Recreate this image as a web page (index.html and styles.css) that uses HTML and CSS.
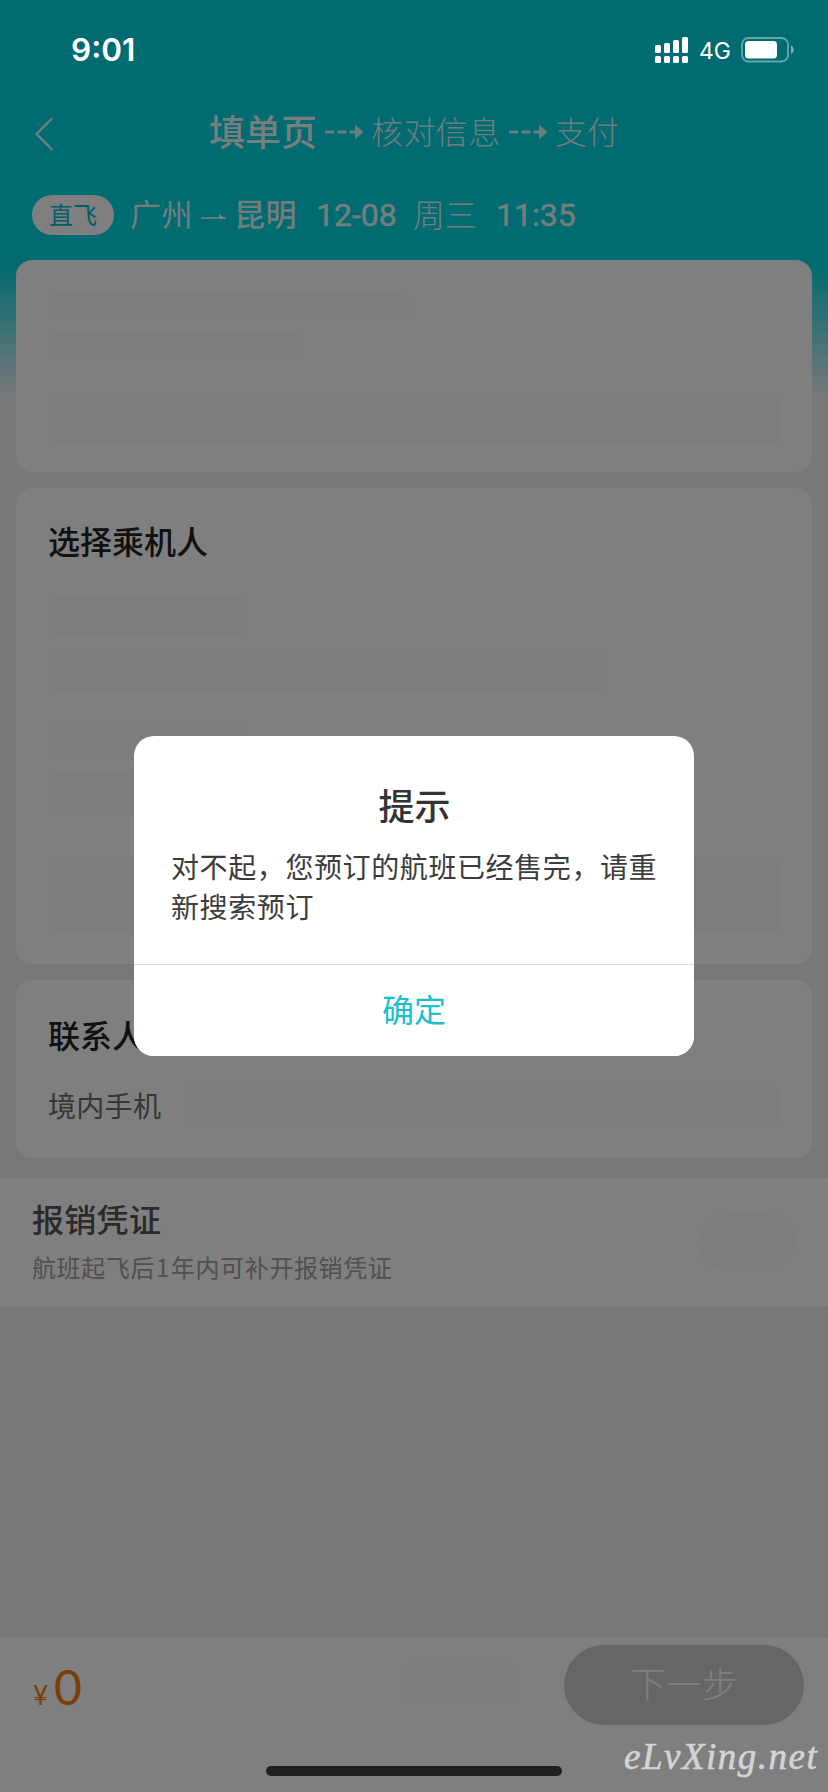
FILE: index.html
```html
<!DOCTYPE html>
<html lang="zh-CN">
<head>
<meta charset="utf-8">
<title>填单页</title>
<link rel="stylesheet" href="styles.css">
</head>
<body>
<div class="screen">
  <div class="page">
    <nav class="nav">
      <svg class="back" width="20" height="34" viewBox="0 0 20 34"><path d="M16.500 2 1.500 17l15 15" fill="none" stroke="#fff" stroke-width="2.4" stroke-linecap="round" stroke-linejoin="round"/></svg>
      <span class="step step-active">填单页</span>
      <svg class="dash" width="39" height="16" viewBox="0 0 39 16"><path d="M0 8h9M12.500 8h9M24.500 8h7" stroke="#fff" stroke-width="3"/><path d="M30.500 1.500v13L38 8z" fill="#fff" stroke="#fff" stroke-linejoin="round"/></svg>
      <span class="step">核对信息</span>
      <svg class="dash" width="39" height="16" viewBox="0 0 39 16"><path d="M0 8h9M12.500 8h9M24.500 8h7" stroke="#fff" stroke-width="3"/><path d="M30.500 1.500v13L38 8z" fill="#fff" stroke="#fff" stroke-linejoin="round"/></svg>
      <span class="step">支付</span>
    </nav>
    <div class="flight">
      <span class="tag">直飞</span>
      <span class="city">广州</span>
      <svg class="to" width="28" height="10" viewBox="0 0 28 10"><path d="M1 7h25" stroke="#fff" stroke-width="1.500"/><path d="M19 3l7 4.700h-7z" fill="#fff"/></svg>
      <span class="city city-to">昆明</span>
      <span class="num date">12-08</span>
      <span class="day">周三</span>
      <span class="num time">11:35</span>
    </div>
    <section class="card card-flight">
      <div class="sk sk-a"></div>
      <div class="sk sk-b"></div>
      <div class="sk sk-c"></div>
    </section>
    <section class="card card-people">
      <h2 class="title">选择乘机人</h2>
      <div class="sk sk-d"></div>
      <div class="sk sk-e"></div>
      <div class="sk sk-f"></div>
      <div class="sk sk-e"></div>
      <div class="sk sk-g"></div>
    </section>
    <section class="card card-contact">
      <h2 class="title">联系人</h2>
      <div class="phone"><span class="label">境内手机</span><div class="sk sk-h"></div></div>
    </section>
    <section class="voucher">
      <div>
        <h2 class="voucher-title">报销凭证</h2>
        <p class="voucher-sub">航班起飞后<span class="one">1</span>年内可补开报销凭证</p>
      </div>
      <div class="sk sk-switch"></div>
    </section>
    <footer class="bar">
      <div class="price"><span class="yen">¥</span><span class="amount">0</span></div>
      <div class="sk sk-bar"></div>
      <button class="next">下一步</button>
    </footer>
  </div>
  <div class="mask">
    <div class="dialog">
      <div class="dialog-body">
        <h1 class="dialog-title">提示</h1>
        <p class="dialog-text">对不起，您预订的航班已经售完，请重新搜索预订</p>
      </div>
      <button class="ok">确定</button>
    </div>
  </div>
  <div class="status">
    <span class="clock">9:01</span>
    <svg class="signal" width="34" height="27" viewBox="0 0 34 27" fill="#fff"><rect y="8" width="6" height="8" rx="1.5"/><rect x="9" y="6" width="6" height="10" rx="1.5"/><rect x="18" y="3" width="6" height="13" rx="1.5"/><rect x="27" width="6" height="16" rx="1.5"/><rect y="19" width="6" height="7" rx="1.5"/><rect x="9" y="19" width="6" height="7" rx="1.5"/><rect x="18" y="19" width="6" height="7" rx="1.5"/><rect x="27" y="19" width="6" height="7" rx="1.5"/></svg>
    <span class="net">4G</span>
    <svg class="battery" width="54" height="26" viewBox="0 0 54 26"><rect x="1" y="1" width="46" height="23.5" rx="6.5" fill="none" stroke="#fff" stroke-opacity=".4" stroke-width="1.8"/><rect x="4" y="4" width="32" height="17.5" rx="3.5" fill="#fff"/><path d="M50 8.500c3.500 1.500 3.500 7 0 8.500z" fill="#fff" fill-opacity=".5"/></svg>
  </div>
  <div class="home"></div>
  <div class="watermark">eLvXing.net</div>
</div>
</body>
</html>
```
FILE: styles.css
```css
* { box-sizing: border-box; }
body, h1, h2, p { margin: 0; }
body { font-family: "Noto Sans CJK SC", sans-serif; }
button { border: 0; padding: 0; font-family: inherit; }
.screen { position: relative; width: 828px; height: 1792px; overflow: hidden; }
.page {
  height: 1792px;
  padding-top: 88px;
  display: flex;
  flex-direction: column;
  background: linear-gradient(#00d6e0 0, #00d6e0 264px, #eceff200 394px), #eceff2;
}
.nav { height: 88px; padding: 0 0 4px 35px; display: flex; align-items: center; flex: none; }
.back { margin: 7px 154px 0 0; opacity: .9; flex: none; }
.step { font-size: 32px; line-height: 44px; font-weight: 300; letter-spacing: .4px; color: rgba(255,255,255,.88); white-space: nowrap; }
.step-active { font-size: 36px; letter-spacing: 0; font-weight: 500; color: rgba(255,255,255,.95); }
.dash { margin: 4px 7px 0 8px; opacity: .85; flex: none; }
.flight { height: 84px; padding: 0 0 7px 32px; display: flex; align-items: center; flex: none; color: rgba(255,255,255,.92); font-size: 31px; line-height: 44px; white-space: nowrap; }
.tag { width: 82px; height: 40px; border-radius: 20px; background: #fff; color: #00c0ca; font-size: 24px; line-height: 37px; text-align: center; margin-right: 16px; }
.city { width: 64px; padding-bottom: 3px; letter-spacing: .6px; }
.city-to { font-weight: 500; }
.to { margin: 2px 6px 0 6px; }
.num { font-family: Roboto, sans-serif; font-weight: 400; font-size: 32px; -webkit-text-stroke: .5px currentColor; }
.date { margin-left: 18px; width: 97px; }
.day { width: 83px; padding-bottom: 3px; font-size: 32px; font-weight: 300; }
.card { margin: 0 16px 16px; padding: 32px; border-radius: 16px; background: #fff; flex: none; }
.card-flight { height: 212px; }
.card-people { height: 476px; }
.card-contact { height: 178px; margin-bottom: 20px; }
.sk { background: #fbfbfb; border-radius: 8px; }
.sk-a { width: 361px; height: 28px; }
.sk-b { width: 256px; height: 28px; margin-top: 12px; }
.sk-c { height: 52px; margin-top: 32px; }
.title { font-size: 32px; line-height: 44px; font-weight: 500; color: #222; }
.card-people .title { margin-top: -2px; }
.sk-d { width: 200px; height: 40px; margin-top: 34px; }
.sk-e { width: 560px; height: 44px; margin-top: 12px; }
.sk-f { width: 200px; height: 40px; margin-top: 28px; }
.sk-g { height: 76px; margin-top: 40px; }
.phone { display: flex; align-items: center; margin-top: 30px; height: 40px; }
.label { font-size: 28px; line-height: 40px; width: 136px; padding-bottom: 2px; letter-spacing: .3px; color: #6c6c6c; }
.sk-h { flex: 1; height: 40px; }
.voucher { flex: none; height: 128px; padding: 18px 32px; background: #fff; display: flex; justify-content: space-between; align-items: flex-start; }
.voucher-title { font-size: 32px; line-height: 44px; letter-spacing: .3px; font-weight: 500; color: #555; }
.voucher-sub { margin-top: 9px; font-size: 24px; line-height: 36px; letter-spacing: .6px; color: #a0a0a0; }
.one { display: inline-block; width: 16px; text-align: center; }
.sk-switch { width: 98px; height: 58px; border-radius: 29px; margin: 17px 0 0 0; }
.bar { margin-top: auto; height: 155px; padding: 8px 24px 0 33px; background: #fff; display: flex; align-items: flex-start; flex: none; }
.price { width: 374px; height: 80px; display: flex; align-items: baseline; color: #f08010; font-family: Lato, sans-serif; }
.yen { font-size: 26px; width: 21px; }
.amount { font-size: 48px; line-height: 84px; }
.sk-bar { width: 109px; height: 40px; margin: 18px 48px 0 0; border-radius: 2px; background: #fcfcfc; }
.next { width: 240px; height: 80px; border-radius: 40px; background: #ccc; color: #fff; font-size: 36px; line-height: 72px; font-weight: 300; padding-bottom: 6px; }
.mask { position: absolute; inset: 0; background: rgba(0,0,0,.5); display: flex; align-items: center; justify-content: center; }
.dialog { width: 560px; height: 320px; border-radius: 20px; background: #fff; overflow: hidden; }
.dialog-body { height: 229px; padding: 43px 36px 0 37px; border-bottom: 1px solid #dcdfe2; }
.dialog-title { font-size: 36px; line-height: 50px; font-weight: 500; color: #333; text-align: center; }
.dialog-text { margin-top: 17px; font-size: 28px; line-height: 40px; letter-spacing: .6px; color: #3c3c3c; margin-right: -8px; }
.ok { display: block; width: 100%; height: 91px; background: #fff; color: #18c0d0; font-size: 32px; line-height: 86px; padding-bottom: 5px; }
.status { position: absolute; top: 0; left: 0; width: 828px; height: 88px; padding-left: 71px; display: flex; align-items: flex-start; color: #fff; font-family: Inter, sans-serif; }
.clock { width: 584px; font-size: 31.5px; line-height: 40px; font-weight: 600; margin-top: 30px; }
.signal { margin-top: 37px; flex: none; }
.net { width: 42px; padding-left: 10px; margin-right: 10px; font-size: 23px; line-height: 30px; font-weight: 400; margin-top: 36px; white-space: nowrap; flex: none; }
.battery { margin-top: 37px; flex: none; }
.home { position: absolute; left: 266px; top: 1766px; width: 296px; height: 10px; border-radius: 5px; background: #212121; }
.watermark { position: absolute; left: 624px; top: 1735px; font-family: "Liberation Serif", serif; font-style: italic; font-weight: 400; -webkit-text-stroke: .6px currentColor; font-size: 37px; line-height: 44px; letter-spacing: 1.5px; color: #d4d4d4; }
```
